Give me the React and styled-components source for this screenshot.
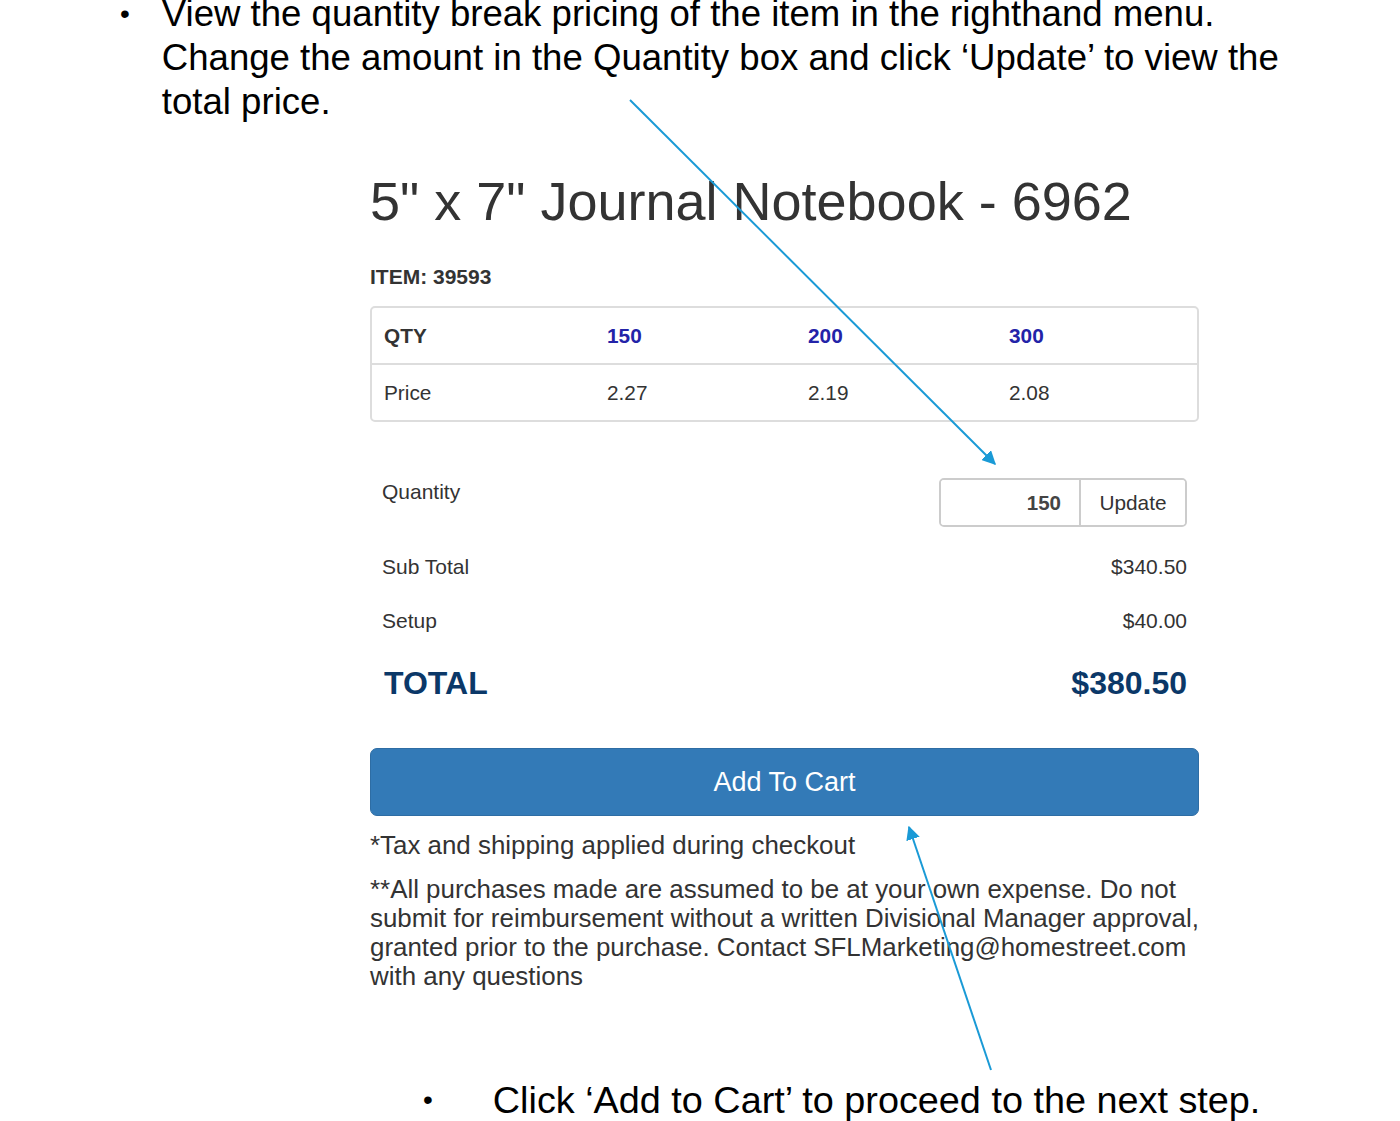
import styled, { createGlobalStyle } from "styled-components";

const GlobalStyle = createGlobalStyle`
  html, body {
    margin: 0;
    padding: 0;
    background: #fff;
  }
  body {
    font-family: "Liberation Sans", Arial, sans-serif;
    color: #333;
  }
`;

const qtyBreaks = [
  { qty: 150, price: "2.27" },
  { qty: 200, price: "2.19" },
  { qty: 300, price: "2.08" },
];

export default function App() {
  return (
    <Slide>
      <GlobalStyle />
      <BulletItem $indent={120} $gap={32} $size={36.6}>
        <Dot>•</Dot>
        <span>
          View the quantity break pricing of the item in the righthand menu.
          Change the amount in the Quantity box and click ‘Update’ to view the
          total price.
        </span>
      </BulletItem>

      <Panel>
        <Title>5" x 7" Journal Notebook - 6962</Title>
        <ItemNo>ITEM: 39593</ItemNo>
        <PriceTable>
          <TableRow>
            <HeadCell>QTY</HeadCell>
            {qtyBreaks.map((b) => (
              <QtyCell key={b.qty}>{b.qty}</QtyCell>
            ))}
          </TableRow>
          <TableRow $last>
            <Cell>Price</Cell>
            {qtyBreaks.map((b) => (
              <Cell key={b.qty}>{b.price}</Cell>
            ))}
          </TableRow>
        </PriceTable>

        <Summary>
          <QuantityRow>
            <span>Quantity</span>
            <InputGroup>
              <QtyInput defaultValue="150" />
              <UpdateButton>Update</UpdateButton>
            </InputGroup>
          </QuantityRow>
          <SummaryRow>
            <span>Sub Total</span>
            <span>$340.50</span>
          </SummaryRow>
          <SummaryRow>
            <span>Setup</span>
            <span>$40.00</span>
          </SummaryRow>
          <TotalRow>
            <span>TOTAL</span>
            <span>$380.50</span>
          </TotalRow>
        </Summary>

        <CartButton>Add To Cart</CartButton>
        <Note>*Tax and shipping applied during checkout</Note>
        <Note $para>
          **All purchases made are assumed to be at your own expense. Do not
          submit for reimbursement without a written Divisional Manager
          approval, granted prior to the purchase. Contact
          SFLMarketing@homestreet.com with any questions
        </Note>
      </Panel>

      <BulletItem $indent={423} $gap={60} $size={37.8} $bottom>
        <Dot>•</Dot>
        <span>Click ‘Add to Cart’ to proceed to the next step.</span>
      </BulletItem>

      <Arrows width="1400" height="1121" viewBox="0 0 1400 1121">
        <defs>
          <marker
            id="head"
            viewBox="0 0 10 10"
            refX="9"
            refY="5"
            markerWidth="7"
            markerHeight="7"
            orient="auto"
          >
            <path d="M0 0 L10 5 L0 10 z" fill="#1a9ad6" />
          </marker>
        </defs>
        <line x1="630" y1="100" x2="995" y2="464" stroke="#1a9ad6" strokeWidth="2" markerEnd="url(#head)" />
        <line x1="991" y1="1070" x2="909" y2="827" stroke="#1a9ad6" strokeWidth="2" markerEnd="url(#head)" />
      </Arrows>
    </Slide>
  );
}

const Slide = styled.div`
  position: relative;
  width: 1400px;
  height: 1121px;
  overflow: hidden;
  background: #fff;
`;

const BulletItem = styled.div`
  display: flex;
  gap: ${(p) => p.$gap}px;
  padding-left: ${(p) => p.$indent}px;
  margin-top: ${(p) => (p.$bottom ? "87px" : "-8px")};
  font-size: ${(p) => p.$size}px;
  line-height: 44px;
  color: #000;
  width: 1180px;
`;

const Dot = styled.span`
  font-size: 28px;
`;

const Panel = styled.div`
  display: flex;
  flex-direction: column;
  width: 829px;
  margin-left: 370px;
  margin-top: 37px;
`;

const Title = styled.h1`
  margin: 0;
  font-size: 54px;
  font-weight: 400;
  line-height: 80px;
  color: #333;
`;

const ItemNo = styled.div`
  margin-top: 24px;
  font-size: 21px;
  font-weight: 700;
  line-height: 24px;
  color: #333;
`;

const PriceTable = styled.div`
  margin-top: 17px;
  border: 2px solid #ddd;
  border-radius: 5px;
  overflow: hidden;
`;

const TableRow = styled.div`
  display: grid;
  grid-template-columns: 223px 201px 201px 1fr;
  height: 55px;
  align-items: center;
  border-bottom: ${(p) => (p.$last ? "none" : "2px solid #ddd")};
`;

const Cell = styled.div`
  padding-left: 12px;
  font-size: 20.8px;
  color: #333;
`;

const HeadCell = styled(Cell)`
  font-weight: 700;
`;

const QtyCell = styled(Cell)`
  font-weight: 700;
  color: #2323a8;
`;

const Summary = styled.div`
  display: flex;
  flex-direction: column;
  padding: 0 12px;
  margin-top: 37px;
`;

const QuantityRow = styled.div`
  display: flex;
  justify-content: space-between;
  align-items: flex-start;
  height: 81px;
  font-size: 21px;
  line-height: 24px;
  color: #333;
  & > span {
    margin-top: 21px;
  }
`;

const SummaryRow = styled.div`
  display: flex;
  justify-content: space-between;
  align-items: center;
  height: 54px;
  font-size: 21px;
  color: #333;
`;

const TotalRow = styled.div`
  display: flex;
  justify-content: space-between;
  align-items: center;
  height: 70px;
  padding-left: 2px;
  font-size: 32px;
  font-weight: 700;
  color: #0b3868;
`;

const InputGroup = styled.div`
  display: flex;
  box-sizing: border-box;
  height: 49px;
  margin-top: 19px;
  border: 2px solid #ccc;
  border-radius: 5px;
  overflow: hidden;
`;

const QtyInput = styled.input`
  width: 120px;
  border: none;
  border-right: 2px solid #ccc;
  padding: 0 18px 0 0;
  text-align: right;
  font-family: "Liberation Sans", Arial, sans-serif;
  font-size: 20.5px;
  font-weight: 700;
  color: #444;
  outline: none;
`;

const UpdateButton = styled.button`
  width: 104px;
  border: none;
  background: #fff;
  font-family: "Liberation Sans", Arial, sans-serif;
  font-size: 20.8px;
  color: #333;
`;

const CartButton = styled.button`
  margin-top: 30px;
  height: 68px;
  border: 1px solid #2e6da4;
  border-radius: 7px;
  background: #337ab7;
  color: #fff;
  font-family: "Liberation Sans", Arial, sans-serif;
  font-size: 27px;
`;

const Note = styled.p`
  margin: ${(p) => (p.$para ? "15px 0 0" : "15px 0 0")};
  font-size: 25.9px;
  line-height: 29px;
  color: #333;
`;

const Arrows = styled.svg`
  position: absolute;
  left: 0;
  top: 0;
  pointer-events: none;
`;
